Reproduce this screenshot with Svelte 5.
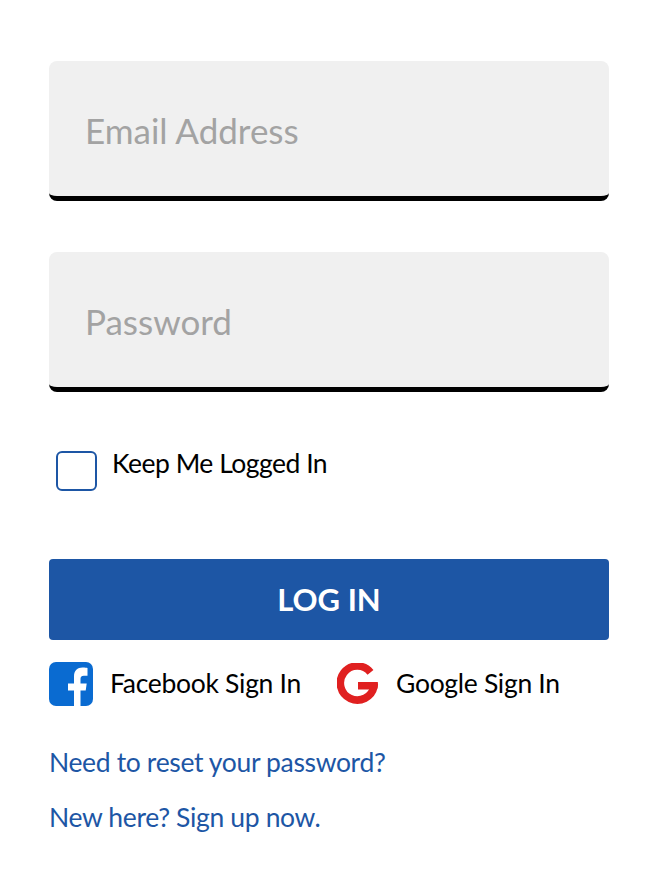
<script>
	let email = $state('')
	let password = $state('')
	let keep = $state(false)
</script>

<form class="login" onsubmit={(e) => e.preventDefault()}>
	<input class="field" type="email" placeholder="Email Address" bind:value={email} />
	<input class="field" type="password" placeholder="Password" bind:value={password} />

	<label class="keep">
		<input type="checkbox" bind:checked={keep} />
		<span>Keep Me Logged In</span>
	</label>

	<button class="submit" type="submit">LOG IN</button>

	<div class="social">
		<a class="provider fb" href="#facebook">
			<svg width="44" height="44" viewBox="0 0 44 44" aria-hidden="true">
				<rect width="44" height="44" rx="7" fill="#0a6bd1" />
				<path fill="#fff" d="M31.5 44V28.500h5.200l1-7h-6.200v-4.400c0-2 .6-3.400 3.400-3.400h3.600V6c-.6-.1-2.600-.4-5-.4-5 0-8.500 3.100-8.500 8.700v7.200h-6v7h6V44z" />
			</svg>
			<span>Facebook Sign In</span>
		</a>
		<a class="provider gg" href="#google">
			<svg width="42" height="42" viewBox="0 0 42 42" aria-hidden="true">
				<path fill="none" stroke="#e02020" stroke-width="7.600" d="M33.500 9.300A17 17 0 1 0 37 23.500" />
				<path fill="#e02020" d="M21 19h19.800c.3 1.500.3 3 .1 4.500L40 26.500H21z" />
			</svg>
			<span>Google Sign In</span>
		</a>
	</div>

	<a class="link first" href="#reset">Need to reset your password?</a>
	<a class="link" href="#signup">New here? Sign up now.</a>
</form>

<style>
	:global(body) {
		background: #fff;
		font-family: "Lato", "Open Sans", sans-serif;
	}
	.login {
		display: flex;
		flex-direction: column;
		padding: 61px 51px 0 49px;
	}
	.field {
		box-sizing: border-box;
		width: 100%;
		height: 140px;
		margin-bottom: 51px;
		padding: 2px 36px 0;
		border: 0;
		border-bottom: 5px solid #000;
		border-radius: 8px;
		background: #f0f0f0;
		font: inherit;
		font-size: 35px;
		outline: none;
	}
	.field::placeholder {
		color: #a3a3a3;
		opacity: 1;
	}
	.keep {
		display: flex;
		align-items: flex-start;
		gap: 15px;
		margin: 8px 0 0 7px;
		height: 108px;
		font-size: 26.5px;
		letter-spacing: -0.5px;
		color: #000;
	}
	.keep input {
		appearance: none;
		box-sizing: border-box;
		width: 41px;
		height: 40px;
		margin: 0;
		border: 2px solid #1d56a5;
		border-radius: 6px;
		background: #fff;
	}
	.keep span {
		line-height: 24px;
	}
	.submit {
		height: 81px;
		padding: 0 0 2px;
		border: 0;
		border-radius: 4px;
		background: #1d56a5;
		color: #fff;
		font: inherit;
		font-size: 31px;
		font-weight: 700;
	}
	.social {
		display: flex;
		align-items: center;
		gap: 36px;
		margin-top: 22px;
	}
	.provider {
		display: flex;
		align-items: center;
		gap: 17px;
		color: #000;
		text-decoration: none;
		font-size: 26.5px;
		letter-spacing: -0.3px;
	}
	.provider span {
		margin-top: -3px;
	}
	.link {
		color: #1d56a5;
		text-decoration: none;
		font-size: 26.5px;
		letter-spacing: -0.35px;
		line-height: 34px;
		margin-top: 21px;
	}
	.link.first {
		margin-top: 39px;
	}
</style>
